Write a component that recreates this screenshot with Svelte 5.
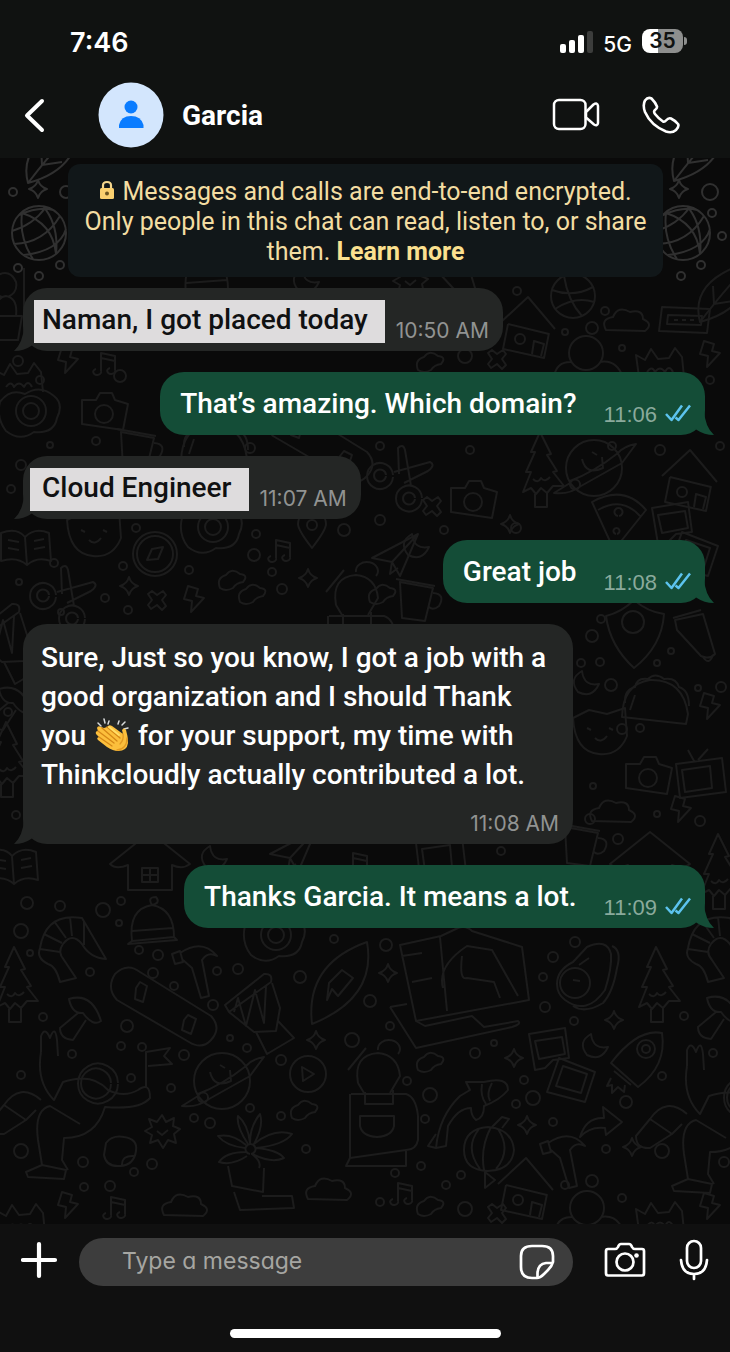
<script lang="ts">
  let draft = ''

  let messages = [
    { out: false, text: 'Naman, I got placed today', time: '10:50 AM', mark: 'narrow' },
    { out: true, text: 'That’s amazing. Which domain?', time: '11:06' },
    { out: false, text: 'Cloud Engineer', time: '11:07 AM', mark: 'wide' },
    { out: true, text: 'Great job', time: '11:08' },
    {
      out: false,
      long: true,
      text: 'Sure, Just so you know, I got a job with a good organization and I should Thank you ',
      rest: ' for your support, my time with Thinkcloudly actually contributed a lot.',
      time: '11:08 AM'
    },
    { out: true, text: 'Thanks Garcia. It means a lot.', time: '11:09' }
  ]

  // small shapes, drawn around 0,0
  let star = 'M0 -9Q2 -2 9 0Q2 2 0 9Q-2 2 -9 0Q-2 -2 0 -9Z'
  let cross = 'M0 -5L6 -9L9 -5L5 0L9 6L5 10L0 5L-6 9L-9 5L-5 0L-9 -6L-5 -9Z'
  let globe = 'M27 0A27 27 0 1 1 -27 0A27 27 0 1 1 27 0M-25 11Q5 10 21 -17M-20 -18Q0 -27 14 -23M-27 -2Q-6 -8 7 -26M-15 22Q20 18 27 -4M-17 -20Q-20 5 -6 26M4 -27Q20 -8 17 21M-17 -20Q14 -10 17 21'
  let tree = 'M0 -38L-9 -18L-5 -18L-14 2L-9 2L-17 22L-9 18L-4 24L1 18L7 23L13 16L24 16L13 2L17 1L7 -15L11 -16ZM-5 24V37H7V23M-7 9Q-2 14 1 8Q5 13 10 7'
  let mushroom = 'M-15 -11Q8 -18 17 11Q9 17 -1 3Q-12 4 -15 -11ZM-6 3L-24 18Q-24 29 -11 30L2 10'
  let cat = 'M-22 20L-25 -2L-16 3L-10 -8L-3 2L8 1L14 -9L21 0L23 20M-14 15Q-9 8 -6 15Q-1 8 4 15Q8 7 12 15'
  let cloud = 'M-22 9Q-28 -2 -15 -4Q-10 -16 2 -9Q15 -12 15 -2Q26 3 17 10Z'
  let blob = 'M-12 8Q-16 -2 -6 -5Q0 -13 8 -6Q17 -5 11 2Q4 3 1 8Q-6 12 -12 8Z'
  let ball = 'M22 0A22 22 0 1 1 -22 0A22 22 0 1 1 22 0M-21 -6Q0 2 20 -9M-9 -20Q-5 5 9 20M-18 13Q2 0 21 6'
  let house = 'M-28 -4L0 -30L27 2M-20 -3L-25 22L16 31L21 6M-20 -3L21 7M-8 7A5 5 0 1 1 -8 17A5 5 0 1 1 -8 7M4 27L6 14L16 17L13 29'
  let bolt = 'M-5 -12L5 -9L3 -2L11 0L-2 14L-1 3L-9 1Z'
  let note = 'M-7 9V-9L7 -6V8M-7 -4L7 -1M-7 9A4 3 0 1 1 -12 7M7 8A4 3 0 1 1 2 6'
  let camera = 'M-22 -12L-8 -12L-4 -19H8L11 -12L24 -8L19 18L-22 12ZM9 2A9 9 0 1 1 -9 2A9 9 0 1 1 9 2'
  let radio = 'M-22 -12L26 -10L23 14L-25 12ZM-16 -4L18 -3L17 6L-17 5ZM-10 1H-6M-2 1H2M6 1H10'
  let book = 'M-24 -12Q-8 -18 0 -8Q10 -18 24 -12L26 16Q12 11 2 20Q-8 11 -24 16ZM0 -8L2 20M-17 -5L-6 -3M-17 3L-6 5M9 -4L19 -6M9 4L20 2'
  let taco = 'M-33 13Q-32 -20 -5 -24Q28 -25 33 10L31 20ZM-30 -1Q-31 -14 -20 -17Q-18 -27 -7 -25Q0 -32 9 -25Q21 -27 24 -17Q34 -14 34 2M-25 6L-20 -9'
  let cup = 'M-15 -16L18 -10L10 23L-13 20ZM-19 -19L20 -12M18 -5Q31 -4 24 8Q18 13 14 9'
  let pin = 'M0 18Q-14 0 -14 -6A14 14 0 0 1 14 -6Q14 0 0 18ZM5 -5A5 5 0 1 1 -5 -5A5 5 0 1 1 5 -5'
  let compass = 'M22 0A22 22 0 1 1 -22 0A22 22 0 1 1 22 0M18 0A18 18 0 1 1 -18 0A18 18 0 1 1 18 0M-8 6L-3 -5L8 -7L3 5Z'
  let donut = 'M-30 -14Q-20 -28 -5 -22Q10 -32 24 -20Q34 -12 27 2Q24 18 4 16Q-10 26 -24 15Q-34 2 -30 -14M16 -5A15 15 0 1 1 -14 -5A15 15 0 1 1 16 -5M9 -5A8 8 0 1 1 -7 -5A8 8 0 1 1 9 -5'
  let scissors = 'M-12 7A13 13 0 1 1 -12 5M-19 6A6 6 0 1 1 -19 5M17 29A13 13 0 1 1 17 28M10 29A6 6 0 1 1 10 28M-11 2L25 -8Q31 -5 23 1L-1 13M-6 4L-7 -22Q-2 -27 0 -20L6 16'
  let leaf = 'M-22 26Q-33 -16 28 -34Q30 12 -22 26ZM-22 26Q-2 0 16 -20M-8 8L-9 -10M-8 8L12 5'
  let helmet = 'M-20 16Q-24 -16 0 -20Q22 -16 22 12ZM-20 6L21 3M-20 16L-24 19L25 15L22 12M0 -20Q-5 -28 4 -28Q9 -22 0 -20'
  let planet = 'M28 0A28 28 0 1 1 -28 0A28 28 0 1 1 28 0M-24 15L-40 25Q-25 27 -13 18L28 -5Q36 -16 42 -24Q30 -22 24 -15Q0 4 -24 13M-12 -9Q-8 8 9 0L8 -11M-2 -16L3 -13M-24 16A5 5 0 1 1 -14 17A5 5 0 1 1 -24 16'
  let rocket = 'M-27 5Q0 -30 24 -25Q29 8 0 29ZM-24 13L-7 27M17 -9A9 9 0 1 1 -1 -9A9 9 0 1 1 17 -9M12 -9A4 4 0 1 1 4 -9A4 4 0 1 1 12 -9M-27 20L-31 28L-26 27L-26 35L-20 29L-14 34L-13 27'
  let avocado = 'M-28 8Q-28 -6 -12 -14L2 -29Q22 -38 26 -22Q27 -8 20 14Q2 40 -20 24Q-28 18 -28 8ZM27 -30Q37 -26 32 -8Q28 16 18 27Q0 38 -12 30M5 7A15 15 0 1 1 -25 7A15 15 0 1 1 5 7M-6 -11L4 -18M-12 4L-5 5'
  let laptop = 'M-52 -41L-11 -50L6 -58Q14 -61 20 -55L70 -39L77 14L-36 35ZM-62 21L-36 62L60 41Q70 38 66 35L32 41L20 30L-27 40L-36 35M-62 21L-45 18M-50 -30L-30 -33M-40 -4L-20 -8M-12 -49L-5 25M-9 2Q-15 -20 15 -40L40 -36L66 10M10 -30Q7 -5 15 -8L42 -4L48 12'
  let snowboard = 'M-49 -38Q-37 -50 -24 -40L47 4Q58 16 47 28Q38 38 25 30L-47 -12Q-58 -24 -49 -38ZM-28 -24L-24 -30L-17 -26L-21 -10L-29 -13ZM20 8L24 3L32 7L27 22L18 18Z'
  let drum = 'M-31 -5L8 -36Q17 -37 15 -28L-27 2ZM-27 2L-2 22L20 21L24 -2L16 -27M-22 2L-18 -12L-10 16L-1 -20L8 13L10 -24M0 22L11 44L38 28L22 11'
  let surf = 'M-27 40Q-34 -20 28 -42Q38 14 -27 40ZM-10 -1L3 -14L14 -6L-1 12L-7 5L-12 16Z'
  let hammer = 'M-22 -14L-14 -17L-11 -6L-19 -4ZM-14 -15Q8 -30 23 -12Q14 -17 8 -8L15 28L7 30L-2 0L-11 -8'
  let shrimp = 'M-30 -4Q-24 -40 12 -34L36 7Q20 6 12 -8Q2 -20 -7 -8Q-13 0 -6 8L6 26L-10 30Q-14 14 -22 12Q-34 6 -30 -4ZM-26 -18L-8 -9M-16 -31L-4 -14M0 -35L2 -16M-30 -3L-10 0M14 -31L14 -7'
  let astronaut = 'M46 -48A20 20 0 1 1 46 -49M39 -48A15 15 0 1 1 39 -49M-31 -80V-96Q-27 -106 -22 -94Q-17 -108 -15 -92L-14 -76M-31 -80Q-36 -50 -18 -32L-9 -50Q20 -60 36 -42Q52 -34 66 -42Q78 -51 78 -34Q68 -22 33 -25Q24 6 -8 6L-10 28L-4 38M-31 -32Q-52 -50 -68 -27L-46 -12L-36 -22M-34 8Q-38 -22 -22 -26L8 -8M-34 8L-30 33L-46 40L-44 45L-8 47L-6 38L-30 33M-68 -27L-82 -10Q-82 3 -68 2L-46 -12M74 -44V-80L98 -84L92 -76L100 -68L76 -66'
  let person = 'M-20 -55Q-25 -83 0 -85Q20 -83 22 -62L12 -45M-20 -55L-14 -45M-13 -46V-34H15V-48M-27 -44H28Q38 -41 40 -22V2Q38 12 28 12L-28 20V-44M-18 -22H16V-12Q14 -2 -1 -1Q-16 -2 -18 -12ZM-28 20L-32 28H28V12M-30 -68L-12 -90M0 -88A11 9 0 1 1 20 -84'
  let flower = 'M0 6A5 5 0 1 1 1 6M-2 -4Q-14 -22 -12 -32Q-2 -24 0 -5Q0 -22 10 -34Q14 -22 4 -4Q24 -20 42 -14Q34 -3 6 0Q28 2 34 10Q22 16 2 6Q12 14 9 20M-5 0Q-24 -2 -32 -12Q-18 -15 -4 -3M-4 4Q-24 4 -31 14Q-18 18 -3 8M-22 18L-18 38L13 44L14 20M-16 44L-10 62L44 60L42 48H12'
  let cactus = 'M-16 20H16L12 44H-12ZM-10 20Q-12 2 0 0Q12 2 10 20M-4 1Q-18 -4 -10 -20Q4 -28 10 -14Q12 -4 2 1M18 20V-28'
  let pumpkin = 'M-24 2Q-24 -19 0 -21Q24 -19 26 2Q24 22 0 23Q-24 22 -24 2ZM-9 -19Q-24 0 -8 21M3 -21Q-8 0 -4 22M10 -19Q24 2 8 21M4 -21L14 -31L21 -29L14 -20M-3 24L7 32L-3 40Z'
  let dolphin = 'M-36 44Q-33 12 -12 -8L-2 -14L-6 -22L12 -22Q36 -28 36 -14Q28 -4 12 2Q12 14 4 16Q-1 12 -1 4Q-14 4 -24 22L-26 42L-36 44L-44 42L-36 30M10 -20Q8 -8 14 0M20 -21Q14 -10 18 -3'
  let frames = 'M-30 -32L6 -38L10 -8L-6 -6L-14 2L-24 4ZM-24 -25L3 -29L6 -12L-20 -7ZM0 -8L36 6L26 36L-12 26ZM4 0L28 8L22 27L-3 20Z'
  let arrow = 'M-20 14Q-14 -6 4 -5L3 -16L22 -1L6 12L5 5Q-10 3 -20 14Z'
  let burst = 'M0 -16L4 -9L12 -13L11 -5L18 -2L12 3L14 12L6 9L1 17L-4 9L-12 12L-10 4L-17 0L-10 -4L-13 -12L-5 -9ZM-5 0L0 4L6 -1'
  let play = 'M18 0A18 18 0 1 1 -18 0A18 18 0 1 1 18 0M-6 -7L6 0L-5 7Z'
  let rings = 'M17 0A17 17 0 1 1 -17 0A17 17 0 1 1 17 0M-14 9Q-29 8 -32 23M14 9Q30 6 37 24'
  let cabin = 'M-40 2L0 -30L40 2Q32 8 22 3V28H-22V3Q-34 8 -40 2ZM-8 6H8V20H-8ZM0 6V20M-8 13H8'
  let moon = 'M-4 -12Q-18 -4 -8 9Q6 16 13 1Q-2 4 -4 -12Z'
  let dog = 'M-26 -14L-10 -22L8 -18L26 -24L28 4Q20 24 0 22Q-24 20 -26 -14ZM-12 -4L-8 -2M10 -4L14 -2M-4 6Q2 12 8 4'
  let stone = 'M-14 -8Q-8 -16 4 -14Q18 -12 16 0Q14 14 0 15Q-14 16 -16 4ZM2 14Q2 4 14 5'
  let pizza = 'M-26 -18Q6 -36 28 -10L-4 30ZM-20 -10Q4 -24 22 -4M0 -4A4 4 0 1 1 1 -4M-2 14A3 3 0 1 1 -1 14'
  let shield = 'M0 34Q-24 12 -28 -18Q-12 -22 0 -34Q14 -22 30 -20Q28 12 0 34ZM10 -12A11 11 0 1 1 -12 -12A11 11 0 1 1 10 -12'
  let bell = 'M-18 -20L10 -26L22 14Q16 20 8 16L-16 -10ZM-20 -22L8 -30M10 17Q16 26 20 15'
  let tv = 'M-24 -14L22 -20L26 14L-20 20ZM-18 -8L10 -12L12 10L-15 14ZM-6 -17L-12 -28M-2 -18L8 -29'
  let plane = 'M-22 4L24 -20L6 22L-2 8ZM24 -20L-2 8L-4 20L4 14'

  let doodles: [string, number, number][] = [
    [globe, 39, 233], [globe, 683, 233], [star, 38, 189], [star, 679, 189], [leaf, 50, 157], [leaf, 696, 155],
    [ball, 573, 296], [house, 528, 327], [cloud, 628, 321], [rings, 586, 353], [cat, 661, 357], [bolt, 709, 353],
    [cross, 497, 359], [blob, 430, 362], [radio, 684, 319], [leaf, 722, 296], [cactus, 6, 296],
    [cat, 20, 372], [bolt, 67, 359], [note, 108, 362], [donut, 30, 416], [camera, 104, 412],
    [helmet, 206, 277], [moon, 306, 281], [burst, 410, 281], [bell, 456, 284],
    [scissors, 405, 470], [planet, 594, 468], [house, 690, 480], [tree, 540, 470],
    [taco, 214, 448], [cup, 136, 448], [snowboard, 320, 448], [cross, 432, 506], [moon, 416, 546], [camera, 473, 500],
    [pizza, 618, 520], [frames, 682, 540], [star, 510, 524], [book, 25, 545],
    [dog, 93, 534], [compass, 155, 554], [donut, 212, 532], [pin, 312, 530], [note, 283, 549], [scissors, 68, 590],
    [star, 129, 586], [cross, 157, 600], [blob, 232, 580], [blob, 252, 594], [bolt, 193, 598], [star, 308, 578],
    [person, 356, 660], [plane, 394, 554], [drum, 4, 640], [blob, 382, 594], [cup, 415, 598],
    [shield, 634, 634], [bell, 693, 640], [taco, 655, 704], [moon, 586, 683], [bolt, 709, 705], [dog, 599, 732],
    [camera, 648, 776], [tv, 700, 778], [bolt, 680, 808], [cloud, 614, 812], [cup, 580, 843], [cabin, 650, 862], [tree, 718, 872],
    [book, 12, 864], [tree, 6, 760], [mushroom, 14, 700], [cabin, 150, 862], [moon, 214, 858], [plane, 292, 850],
    [tv, 440, 857], [note, 360, 862], [shrimp, 70, 952], [helmet, 152, 925], [hammer, 194, 968], [donut, 275, 940],
    [tree, 14, 985], [mushroom, 84, 1010], [snowboard, 164, 1012], [drum, 256, 1010], [surf, 339, 984],
    [laptop, 452, 986], [avocado, 585, 976], [tree, 656, 985], [mushroom, 722, 1009], [shrimp, 718, 952],
    [astronaut, 72, 1132], [planet, 222, 1081], [play, 308, 1074], [star, 316, 1040], [burst, 162, 1131],
    [blob, 304, 1110], [flower, 250, 1148], [person, 378, 1138], [stone, 120, 1151],
    [cat, 22, 1213], [bolt, 67, 1204], [cloud, 186, 1206], [cloud, 330, 1190], [note, 118, 1206],
    [frames, 559, 1066], [star, 514, 1058], [star, 614, 1020], [star, 388, 973], [blob, 430, 1062],
    [rocket, 638, 1058], [moon, 595, 1046], [dolphin, 472, 1104], [pumpkin, 488, 1148], [arrow, 600, 1123],
    [star, 527, 1125], [star, 632, 1147], [hammer, 562, 1158], [astronaut, 718, 1146], [house, 526, 1188],
    [rings, 587, 1208], [cat, 661, 1211], [bolt, 709, 1205], [cross, 497, 1213], [note, 405, 1192], [blob, 430, 1206]
  ]

  let dots = [
    [13, 192, 4], [66, 192, 6], [18, 268, 4], [39, 276, 4], [60, 265, 4], [710, 192, 8], [712, 213, 4], [722, 236, 4], [701, 265, 4], [681, 276, 4],
    [517, 291, 4], [605, 311, 4], [592, 328, 6], [565, 332, 3], [465, 356, 7], [622, 348, 3], [710, 380, 4], [18, 361, 5], [40, 380, 4], [120, 376, 6],
    [50, 445, 3], [96, 441, 4], [250, 448, 5], [380, 446, 4], [470, 450, 4], [612, 446, 4], [660, 450, 5], [380, 520, 5], [444, 530, 4], [516, 528, 5],
    [11, 489, 4], [21, 465, 5], [136, 528, 4], [256, 534, 4], [344, 530, 6], [254, 555, 6], [189, 570, 4], [123, 566, 4], [54, 563, 4], [19, 582, 3],
    [105, 598, 4], [272, 572, 4], [282, 589, 5], [61, 612, 3], [128, 610, 4], [8, 712, 4], [16, 815, 4], [592, 636, 6], [601, 619, 4], [581, 663, 4],
    [600, 662, 4], [671, 651, 3], [611, 685, 6], [657, 663, 3], [721, 687, 5], [622, 729, 5], [698, 688, 3], [640, 728, 4], [593, 786, 3], [590, 819, 5],
    [618, 839, 5], [657, 814, 3], [700, 821, 5], [501, 851, 4], [27, 903, 6], [60, 906, 5], [103, 910, 7], [121, 901, 4], [21, 931, 7], [119, 923, 3],
    [30, 953, 3], [139, 950, 4], [158, 955, 5], [153, 973, 5], [90, 972, 4], [174, 986, 4], [217, 971, 4], [238, 969, 5], [300, 977, 6], [334, 939, 4],
    [43, 1017, 4], [127, 1026, 6], [213, 1005, 5], [230, 1038, 3], [247, 1048, 4], [352, 1040, 7], [121, 1046, 4], [142, 1047, 4], [72, 1054, 4], [184, 1055, 5],
    [21, 1075, 4], [131, 1078, 4], [171, 1088, 4], [281, 1060, 5], [250, 1108, 4], [281, 1116, 4], [194, 1118, 4], [210, 1123, 5], [21, 1151, 7], [83, 1162, 5],
    [134, 1172, 4], [84, 1187, 4], [110, 1186, 5], [306, 1149, 4], [152, 1164, 5], [386, 945, 6], [553, 957, 5], [575, 942, 5], [543, 977, 4], [370, 1001, 6],
    [545, 1007, 5], [574, 1021, 4], [390, 1026, 4], [684, 1016, 4], [475, 1053, 5], [494, 1043, 3], [430, 1095, 7], [407, 1081, 4], [524, 1080, 4], [533, 1098, 7],
    [516, 1104, 4], [553, 1122, 4], [425, 1119, 4], [626, 1102, 6], [662, 1076, 4], [713, 1053, 4], [606, 1149, 4], [662, 1151, 7], [421, 1166, 4], [395, 1173, 4],
    [461, 1175, 4], [446, 1185, 4], [465, 1209, 7], [565, 1185, 4], [592, 1181, 6], [622, 1198, 4], [724, 1162, 5], [380, 1202, 4], [720, 446, 4]
  ]

  // the top strip of the wallpaper is a little brighter
  function ink(y: number) {
    return y < 280 ? '#303030' : '#1c1c1c'
  }
</script>

<div class="phone">
  <header>
    <div class="status">
      <span class="clock">7:46</span>
      <svg class="signal" width="34" height="22" viewBox="0 0 34 22" fill="#fff" aria-hidden="true">
        <rect x="0" y="13" width="6" height="9" rx="2" />
        <rect x="9" y="9" width="6" height="13" rx="2" />
        <rect x="18" y="4" width="6" height="18" rx="2" />
        <rect x="27" y="0" width="6" height="22" rx="2" fill="#3c3d3c" />
      </svg>
      <span class="net">5G</span>
      <span class="battery">35</span>
      <span class="nub"></span>
    </div>
    <div class="top">
      <button class="back" aria-label="Back">
        <svg width="24" height="36" viewBox="0 0 24 36" fill="none" stroke="#fff" stroke-width="4" stroke-linecap="round" stroke-linejoin="round">
          <path d="M19 4L4 18.500L19 33" />
        </svg>
      </button>
      <svg class="avatar" width="66" height="66" viewBox="0 0 66 66" aria-hidden="true">
        <circle cx="33" cy="33" r="32.500" fill="#d3e6fd" />
        <circle cx="33" cy="25" r="6.500" fill="#0a7cff" />
        <path d="M21 46V43Q23 34 33 34Q43 34 45.500 43V46Z" fill="#0a7cff" />
      </svg>
      <h1>Garcia</h1>
      <button aria-label="Video call">
        <svg width="48" height="36" viewBox="0 0 48 36" fill="none" stroke="#fff" stroke-width="2.500" stroke-linejoin="round">
          <rect x="2" y="3" width="31.500" height="29" rx="5" />
          <path d="M34 15L41.500 7.500Q45.500 5 46 9V26Q45.500 29.500 42 27.500L34 20.500Z" />
        </svg>
      </button>
      <button class="call" aria-label="Voice call">
        <svg width="38" height="38" viewBox="0 0 38 38" fill="none" stroke="#fff" stroke-width="2.600" stroke-linejoin="round">
          <path d="M3 4.500Q6 0.500 9.500 2.500Q13.500 6.500 15 10.500Q15.500 12 12.500 14.500Q11.500 16 13 18Q16.500 22.500 21 25.500Q22.500 26.300 24 24.500Q26.500 21.500 29 22.500Q33 24.500 36 28Q37.500 30.500 34 34Q30 37.500 24 35.500Q9 29.500 3 16Q0.500 9 3 4.500Z" />
        </svg>
      </button>
    </div>
  </header>

  <main>
    <svg class="wallpaper" viewBox="0 158 730 1066" preserveAspectRatio="xMidYMin slice" aria-hidden="true">
      <g fill="none" stroke-width="2" stroke-linejoin="round">
        {#each doodles as [d, x, y]}
          <path {d} transform="translate({x} {y})" stroke={ink(y + 15)} />
        {/each}
        {#each dots as [x, y, r]}
          <circle cx={x} cy={y} {r} stroke={ink(y)} />
        {/each}
      </g>
    </svg>

    <p class="notice">
      <svg width="17" height="20" viewBox="0 0 17 20" aria-hidden="true">
        <path d="M4 9V5.500Q4 2 8 2Q12 2 12 5.500V9" fill="none" stroke="#f5d78e" stroke-width="2.200" />
        <rect x="1" y="8" width="14" height="11" rx="1.500" fill="#fbd06f" />
        <circle cx="8" cy="13.500" r="2" fill="#6d5520" />
      </svg>
      Messages and calls are end-to-end encrypted. Only people in this chat can read, listen to, or share them. <a href="#learn">Learn more</a>
    </p>

    {#each messages as m}
      <div class="bubble" class:out={m.out} class:long={m.long}>
        <p class="text {m.mark ?? ''}">{m.text}{#if m.rest}<svg class="clap" width="34" height="34" viewBox="0 0 34 34" role="img" aria-label="clapping hands">
              <path d="M3 5L6 8M9 1L10 5M14 3L13 6M23 6L24 3M27 7L30 4M29 11L33 10" stroke="#d8dadb" stroke-width="1.500" stroke-linecap="round" />
              <path d="M12 9Q14 6 17 8L28 16L27 12Q29 9 31 12Q33 18 33 25Q32 33 23 33Q18 33 12 29L3 22Q1 20 4 19L1 16Q0 13 3 13L2 10Q3 7 6 9L9 10Z" fill="#fcbf3c" />
              <path d="M12 9L25 20M7 10L22 23M3 13L19 25M4 19L17 28" fill="none" stroke="#d58717" stroke-width="1.300" stroke-linecap="round" />
              <path d="M28 16Q29 22 25 26M32 20Q32 31 22 32" fill="none" stroke="#e49a22" stroke-width="1.300" stroke-linecap="round" />
              <path d="M14 9L24 17" stroke="#ffdd67" stroke-width="2" stroke-linecap="round" />
            </svg>{m.rest}{/if}</p>
        <span class="time">{m.time}</span>
        {#if m.out}
          <svg class="ticks" width="26" height="19" viewBox="0 0 26 19" fill="none" stroke="#5cc3ee" stroke-width="2.500" stroke-linejoin="round" role="img" aria-label="Read">
            <path d="M1 10L6.500 16L17 1.500M10.500 13.500L13.500 16L25 1.500" />
          </svg>
        {/if}
        <svg class="tail" width="20" height="26" viewBox="0 0 20 26" aria-hidden="true">
          <path d="M0 18V0H10Q11 17 20 25Q10 25 3 20Z" />
        </svg>
      </div>
    {/each}
  </main>

  <footer>
    <form on:submit|preventDefault={() => (draft = '')}>
      <button type="button" aria-label="Attach">
        <svg width="38" height="38" viewBox="0 0 38 38" stroke="#fff" stroke-width="4.200" stroke-linecap="round">
          <path d="M18 3V35M2 19H34" />
        </svg>
      </button>
      <div class="field">
        <input type="text" aria-label="Message" placeholder="Type a message" bind:value={draft} />
        <button type="button" aria-label="Stickers">
          <svg width="36" height="36" viewBox="0 0 36 36" fill="none" stroke="#fff" stroke-width="2.700" stroke-linejoin="round">
            <path d="M18 34H13Q2 34 2 23V12Q2 2 13 2H23Q34 2 34 12V18Q33 22 29 26L25 30Q21 34 18 34Z" />
            <path d="M18.500 34V29Q19 20 27 19H34" />
          </svg>
        </button>
      </div>
      <button type="button" aria-label="Camera">
        <svg width="42" height="36" viewBox="0 0 42 36" fill="none" stroke="#fff" stroke-width="2.700" stroke-linejoin="round">
          <path d="M4 7H11Q13 7 14 5Q15 2 17 2H25Q27 2 28 5Q29 7 31 7H38Q40 7 40 9V31Q40 33.500 38 33.500H4Q2 33.500 2 31V9Q2 7 4 7Z" />
          <circle cx="21" cy="20" r="8.500" />
          <circle cx="32.500" cy="13.500" r="2.300" fill="#fff" stroke="none" />
        </svg>
      </button>
      <button type="button" class="mic" aria-label="Voice message">
        <svg width="30" height="42" viewBox="0 0 30 42" fill="none" stroke="#fff" stroke-width="2.700" stroke-linecap="round">
          <rect x="8" y="2" width="14" height="27" rx="7" />
          <path d="M2 21Q3 35 15 35Q27 35 28 21M15 35V40" />
        </svg>
      </button>
    </form>
    <div class="home"></div>
  </footer>
</div>

<style>
  :global(body) {
    background: #101211;
  }
  .phone {
    min-height: 100vh;
    display: flex;
    flex-direction: column;
    font-family: Roboto, sans-serif;
    color: #fff;
  }
  button {
    display: flex;
    padding: 0;
    border: none;
    background: none;
    cursor: pointer;
  }
  svg {
    flex: none;
  }
  header {
    background: #101211;
  }
  .status {
    height: 74px;
    box-sizing: border-box;
    padding: 10px 43px 0 70px;
    display: flex;
    align-items: center;
  }
  .clock {
    flex: 1;
    font-family: Inter, sans-serif;
    font-size: 27px;
    font-weight: 600;
  }
  .net {
    margin: 4px 10px 0 9px;
    font-family: Inter, sans-serif;
    font-size: 21px;
    font-weight: 500;
  }
  .battery {
    width: 41px;
    height: 24px;
    margin-bottom: 2px;
    border-radius: 8px;
    background: linear-gradient(90deg, #fff 40%, #8e8f8e 40%);
    color: #101211;
    font-family: Inter, sans-serif;
    font-size: 21px;
    font-weight: 600;
    line-height: 24px;
    text-align: center;
  }
  .nub {
    width: 3px;
    height: 8px;
    margin: 0 0 2px 1px;
    border-radius: 0 4px 4px 0;
    background: #8e8f8e;
  }
  .top {
    height: 84px;
    box-sizing: border-box;
    padding: 0 50px 2px 23px;
    display: flex;
    align-items: center;
  }
  .avatar {
    margin: 0 18px 0 51px;
  }
  h1 {
    flex: 1;
    margin: 0;
    font-size: 28px;
    font-weight: 700;
  }
  .call {
    margin-left: 42px;
  }
  main {
    flex: 1;
    position: relative;
    display: flex;
    flex-direction: column;
    gap: 21px;
    padding: 6px 25px 21px 23px;
    background: #0a0a0a;
    overflow: hidden;
  }
  .wallpaper {
    position: absolute;
    inset: 0;
    width: 100%;
    height: 100%;
  }
  .notice {
    position: relative;
    margin: 0 42px -10px 45px;
    padding: 13px 14px 10px;
    border-radius: 12px;
    background: #111719;
    color: #f3dda2;
    font-size: 25px;
    line-height: 30px;
    text-align: center;
  }
  .notice a {
    color: #fbe08f;
    font-weight: 700;
    text-decoration: none;
  }
  .bubble {
    position: relative;
    align-self: flex-start;
    display: flex;
    align-items: flex-end;
    max-width: 550px;
    box-sizing: border-box;
    padding: 12px 14px 8px 0;
    border-radius: 24px;
    background: #242625;
    fill: #242625;
  }
  .out {
    align-self: flex-end;
    padding-left: 20px;
    background: #144d37;
    fill: #144d37;
  }
  .long {
    flex-direction: column;
    padding-left: 18px;
  }
  .text {
    position: relative;
    z-index: 1;
    margin: 0 0 4px;
    font-size: 28px;
    font-weight: 500;
    line-height: 39px;
  }
  .narrow,
  .wide {
    margin-bottom: 0;
    padding-bottom: 4px;
    background: #dedcdd;
    color: #101112;
  }
  .narrow {
    margin-left: 11px;
    padding-right: 17px;
    padding-left: 8px;
  }
  .wide {
    margin-left: 7px;
    padding-right: 17px;
    padding-left: 12px;
  }
  .long .text {
    margin: 2px 0 18px;
  }
  .clap {
    height: 34px;
    margin: 0 2px;
    vertical-align: -7px;
  }
  .time {
    margin-left: 11px;
    color: #919392;
    font-family: Inter, sans-serif;
    font-size: 21px;
    line-height: 24px;
    white-space: nowrap;
  }
  .out .time {
    margin-left: 27px;
    color: #8aaa9c;
    font-family: "Liberation Sans", sans-serif;
    font-size: 22px;
  }
  .ticks {
    margin: 0 0 4px 8px;
  }
  .tail {
    position: absolute;
    bottom: -1px;
    left: -9px;
    transform: scaleX(-1);
  }
  .out .tail {
    right: -9px;
    left: auto;
    transform: none;
  }
  footer {
    padding: 14px 21px;
    background: #101010;
  }
  form {
    display: flex;
    align-items: center;
  }
  form > button {
    margin-bottom: 4px;
  }
  .field {
    flex: 1;
    min-width: 0;
    height: 48px;
    box-sizing: border-box;
    margin: 0 31px 0 20px;
    padding: 0 18px 0 43px;
    border-radius: 24px;
    background: #3d3d3d;
    display: flex;
    align-items: center;
  }
  input {
    flex: 1;
    min-width: 0;
    padding: 0 0 2px;
    border: none;
    outline: none;
    background: none;
    color: #fff;
    font-family: Inter, sans-serif;
    font-size: 23px;
    font-feature-settings: "cv11";
  }
  input::placeholder {
    color: #a6a6a2;
    opacity: 1;
  }
  form > .mic {
    margin-left: 33px;
  }
  .home {
    width: 271px;
    height: 9px;
    margin: 43px auto 0;
    border-radius: 5px;
    background: #fff;
  }
</style>
